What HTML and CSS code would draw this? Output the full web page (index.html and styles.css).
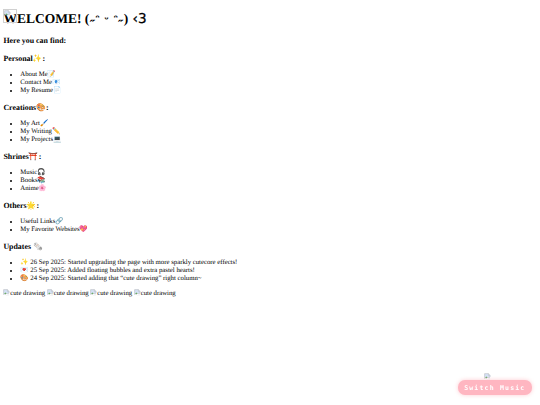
FILE: index.html
```html
<!DOCTYPE html>
<html lang="en">

<head>
  <meta charset="UTF-8">
  <meta name="viewport" content="width=device-width, initial-scale=1.0">
  <title>Welcome</title>
  <link rel="stylesheet" href="styles.css">
</head>

<body>
  <svg class="icon-defs" width="0" height="0">
    <symbol id="broken-img" viewBox="0 0 16 16">
      <path d="M1.5 1.5h9l4 4v4l-3 1.500-2-1.500-3 3-2-1-3 1.500z" fill="#d5e2f5" stroke="#9aa0a8"/>
      <path d="M10.500 1.500v4h4" fill="#fff" stroke="#9aa0a8"/>
      <path d="M3 11l3-3 2 2-3 2.500z" fill="#5fa84f"/>
      <path d="M6 15.500h8.500v-3l-3 1-1-.5z" fill="#e4e6ea"/>
    </symbol>
  </svg>

  <div class="top-icon"><svg class="broken-icon"><use href="#broken-img"/></svg></div>

  <h1>WELCOME! <span class="kaomoji">(˶ᵔ ᵕ ᵔ˶)</span> <span class="heart-text">‹3</span></h1>

  <h3>Here you can find:</h3>

  <h3>Personal✨:</h3>
  <ul>
    <li>About Me📝</li>
    <li>Contact Me📧</li>
    <li>My Resume📄</li>
  </ul>

  <h3>Creations🎨:</h3>
  <ul>
    <li>My Art🖌️</li>
    <li>My Writing✏️</li>
    <li>My Projects💻</li>
  </ul>

  <h3>Shrines⛩️:</h3>
  <ul>
    <li>Music🎧</li>
    <li>Books📚</li>
    <li>Anime🌸</li>
  </ul>

  <h3>Others🌟:</h3>
  <ul>
    <li>Useful Links🔗</li>
    <li>My Favorite Websites💖</li>
  </ul>

  <h3>Updates 🗞️</h3>
  <ul class="updates">
    <li>✨ 26 Sep 2025: Started upgrading the page with more sparkly cutecore effects!</li>
    <li>💌 25 Sep 2025: Added floating bubbles and extra pastel hearts!</li>
    <li>🎨 24 Sep 2025: Started adding that “cute drawing” right column~</li>
  </ul>

  <div class="drawings">
    <span class="drawing"><svg class="broken-icon"><use href="#broken-img"/></svg>cute drawing</span>
    <span class="drawing"><svg class="broken-icon"><use href="#broken-img"/></svg>cute drawing</span>
    <span class="drawing"><svg class="broken-icon"><use href="#broken-img"/></svg>cute drawing</span>
    <span class="drawing"><svg class="broken-icon"><use href="#broken-img"/></svg>cute drawing</span>
  </div>

  <div class="music-widget">
    <svg class="broken-icon widget-icon"><use href="#broken-img"/></svg>
    <button class="music-btn">Switch Music</button>
  </div>
</body>

</html>
```

FILE: styles.css
```css
html {
  background-color: #fff;
  filter: blur(0.3px);
}

body {
  margin: 3.4px;
  font-family: "Liberation Serif", serif;
  font-size: 6.75px;
  line-height: 8px;
  color: #000;
  text-rendering: geometricPrecision;
}

h1 {
  font-size: 13.5px;
  line-height: 16px;
  margin: 8px 0 9px;
}

.kaomoji {
  letter-spacing: 0.9px;
}

.heart-text {
  font-family: "DejaVu Sans", sans-serif;
  font-weight: normal;
  -webkit-text-stroke: 0.3px #000;
}

h3 {
  font-size: 7.9px;
  line-height: 9px;
  margin: 7px 0 8.5px;
}

ul {
  margin: 0 0 7.5px;
  padding-left: 16.9px;
}

.updates {
  margin-bottom: 5.5px;
}

.icon-defs {
  position: absolute;
}

.broken-icon {
  width: 6.75px;
  height: 6.75px;
  vertical-align: -1px;
}

.top-icon {
  position: absolute;
  top: 9px;
  left: 3px;
  width: 12px;
  height: 12px;
  display: flex;
  border: 1px solid #d0d0d0;
}

.music-widget {
  position: fixed;
  right: 8px;
  bottom: 10px;
  display: flex;
  flex-direction: column;
  align-items: center;
}

.widget-icon {
  margin-right: 14px;
}

.music-btn {
  border: none;
  border-radius: 7px;
  background-color: #ffb6c1;
  color: #fff;
  font-family: "DejaVu Sans Mono", monospace;
  font-size: 6.5px;
  font-weight: bold;
  letter-spacing: 1.2px;
  padding: 3.5px 6.5px;
  box-shadow: 0 0 4px rgba(255, 182, 193, 0.7);
}
```
